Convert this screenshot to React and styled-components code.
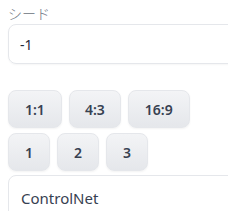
import React from "react";
import styled, { createGlobalStyle } from "styled-components";

const Global = createGlobalStyle`
  body {
    margin: 0;
    background: #ffffff;
    font-family: "Noto Sans", "Noto Sans CJK JP", sans-serif;
    overflow: hidden;
  }
`;

const Page = styled.div`
  padding: 4px 0 0 8px;
  width: 260px;
`;

const Label = styled.div`
  font-size: 14px;
  color: #6b7280;
  line-height: 18px;
  margin-bottom: 2px;
  font-family: "Noto Sans CJK JP", sans-serif;
  font-weight: 300;
`;

const Field = styled.div`
  height: 40px;
  box-sizing: border-box;
  border: 1px solid #e5e7eb;
  border-radius: 8px;
  display: flex;
  align-items: center;
  padding: 0 11px;
  font-size: 14px;
  color: #1f2937;
  box-shadow: 0 1px 2px rgba(0, 0, 0, 0.04);
`;

const Buttons = styled.div`
  display: flex;
  gap: 7px;
  margin-top: ${(p) => p.top}px;
`;

const Btn = styled.button`
  height: 38px;
  padding: 0 ${(p) => p.pad}px;
  border: 1px solid #e5e7eb;
  border-radius: 8px;
  background: linear-gradient(to bottom, #f3f4f6, #e5e7eb);
  color: #374151;
  font-family: "Noto Sans", sans-serif;
  font-weight: 600;
  font-size: 14px;
  box-shadow: 0 1px 2px rgba(0, 0, 0, 0.05);
`;

const Panel = styled.div`
  margin-top: 4px;
  height: 60px;
  border: 1px solid #e5e7eb;
  border-radius: 8px 0 0 0;
  padding: 12px 12px;
  box-sizing: border-box;
  font-size: 15px;
  color: #374151;
`;

export default function App() {
  return (
    <Page>
      <Global />
      <Label>シード</Label>
      <Field>-1</Field>
      <Buttons top={26}>
        <Btn pad={16}>1:1</Btn>
        <Btn pad={15}>4:3</Btn>
        <Btn pad={16}>16:9</Btn>
      </Buttons>
      <Buttons top={5}>
        <Btn pad={16}>1</Btn>
        <Btn pad={16}>2</Btn>
        <Btn pad={16}>3</Btn>
      </Buttons>
      <Panel>ControlNet</Panel>
    </Page>
  );
}
